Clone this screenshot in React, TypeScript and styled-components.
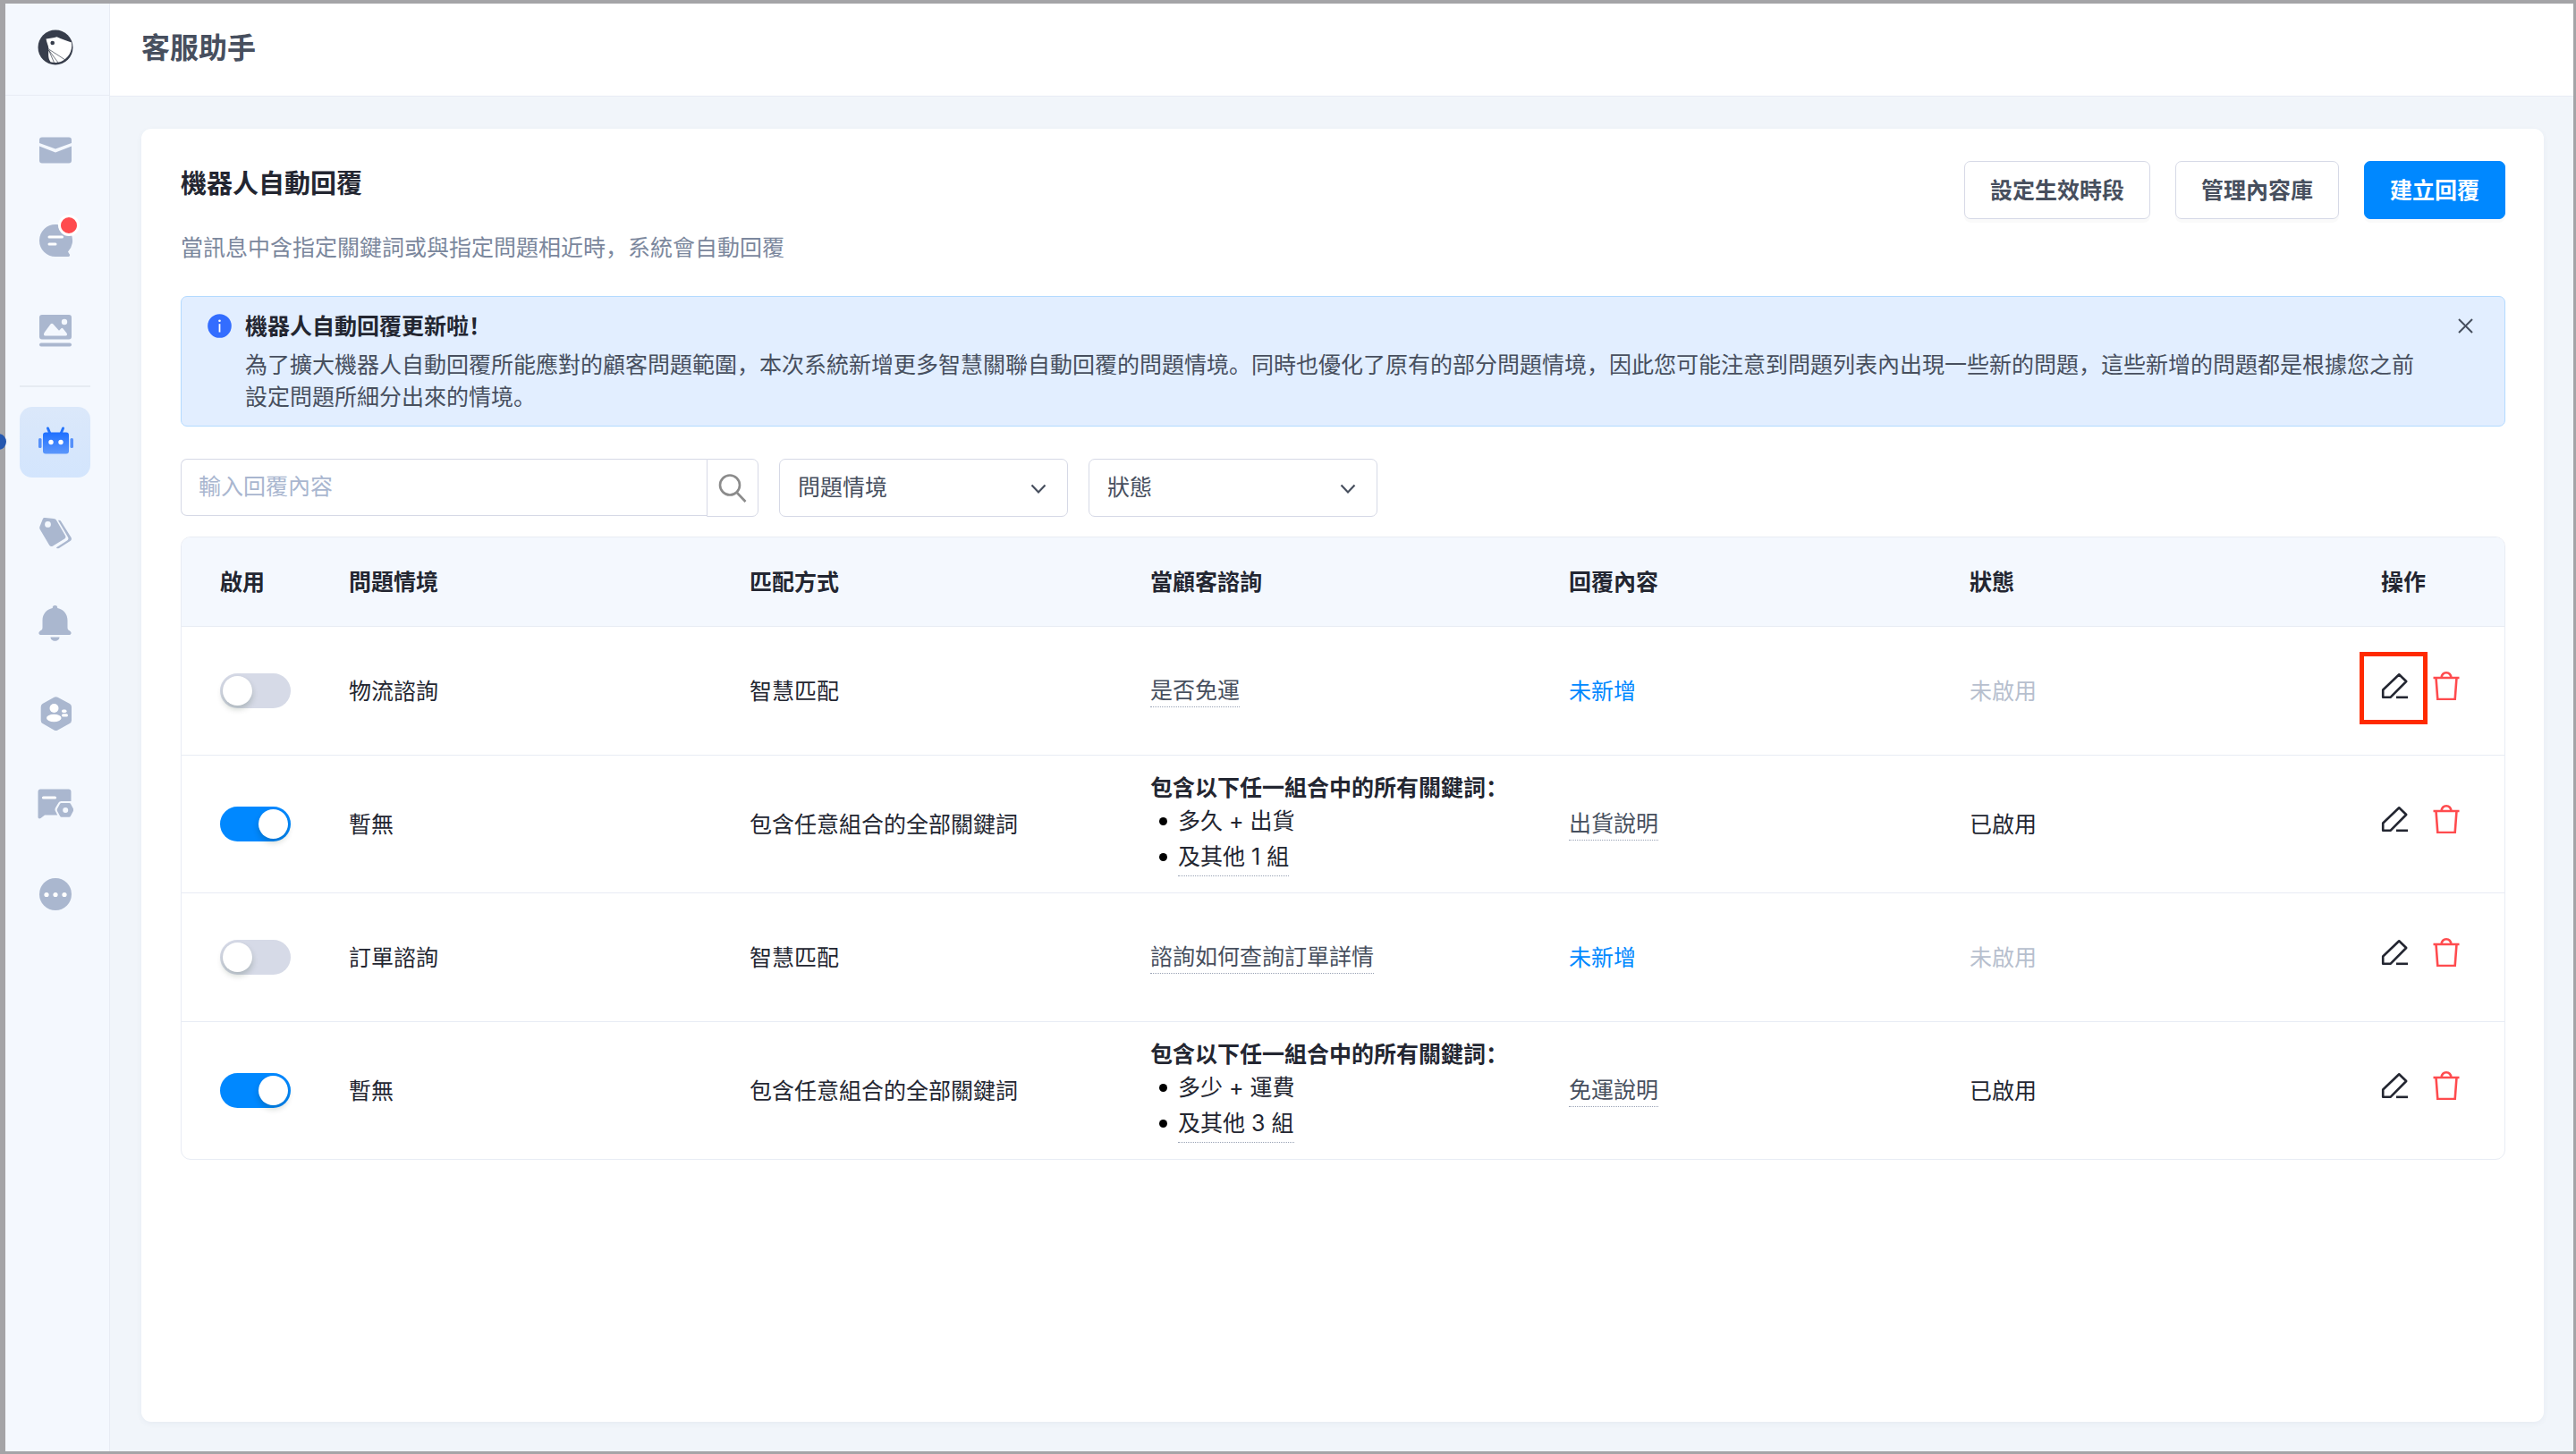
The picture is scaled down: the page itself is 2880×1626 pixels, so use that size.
import React, { useId, useState } from "react";
import styled, { createGlobalStyle, css } from "styled-components";

const color = {
  frame: "#a4a4a7",
  ink: "#232631",
  body: "#474f5e",
  muted: "#7b879d",
  placeholder: "#a9b6cf",
  disabled: "#b7bfce",
  primary: "#0088ff",
  danger: "#ff4b4e",
  line: "#e8ecf4",
  control: "#d6d9e6",
  rail: "#f4f8fe",
  canvas: "#f1f5fa",
  icon: "#aab7cf",
};

const GlobalStyle = createGlobalStyle`
  *, *::before, *::after { box-sizing: border-box; }
  body { margin: 0; }
  body, button, input, select {
    font-family: Inter, "Noto Sans CJK SC", "Noto Sans CJK TC", sans-serif;
    font-size: 25px;
    line-height: 36px;
    color: ${color.ink};
  }
  button { padding: 0; border: 0; background: none; cursor: pointer; }
  ul { margin: 0; padding: 0; list-style: none; }
  h1, h2, h3, p { margin: 0; font-weight: 700; }
`;

const Shell = styled.div`
  display: flex;
  min-height: 100vh;
  border: solid ${color.frame};
  border-width: 4px 3px 3px 6px;
  background: ${color.canvas};
`;

const Rail = styled.aside`
  flex: none;
  width: 117px;
  padding-right: 5px;
  background: ${color.rail};
  border-right: 1px solid ${color.line};
`;

const LogoLink = styled.a`
  display: flex;
  align-items: center;
  justify-content: center;
  height: 103px;
  margin-right: -5px;
  padding: 0 5px 4px 0;
  border-bottom: 1px solid ${color.line};
`;

const NavList = styled.ul`
  display: flex;
  flex-direction: column;
  align-items: center;
  gap: 22px;
  padding-top: 21px;
`;

const NavDivider = styled.li`
  width: 79px;
  height: 2px;
  background: #e6ebf2;
`;

const NavItem = styled.li`
  position: relative;
`;

const NavButton = styled.button<{ $active?: boolean }>`
  display: flex;
  align-items: center;
  justify-content: center;
  width: 79px;
  height: 79px;
  border-radius: 14px;
  ${(p) => p.$active && css`background: linear-gradient(#dbe8fa, #d3e5fd);`}
`;

const Badge = styled.span`
  position: absolute;
  top: 11px;
  left: 43px;
  width: 24px;
  height: 24px;
  border: 3px solid #fff;
  border-radius: 50%;
  background: ${color.danger};
`;

const ActiveDot = styled.span`
  position: absolute;
  top: 30px;
  left: -32px;
  width: 17px;
  height: 18px;
  border-radius: 50%;
  background: #2558b0;
`;

const Page = styled.div`
  flex: 1;
  min-width: 0;
  display: flex;
  flex-direction: column;
`;

const TopBar = styled.header`
  display: flex;
  align-items: center;
  height: 104px;
  padding: 0 35px 4px;
  background: #fff;
  border-bottom: 1px solid ${color.line};
`;

const PageTitle = styled.h1`
  font-size: 32px;
  color: ${color.body};
`;

const Card = styled.main`
  flex: 1;
  margin: 36px 33px 33px 35px;
  padding: 36px 43px 44px 44px;
  border-radius: 11px;
  background: #fff;
  box-shadow: 0 2px 6px rgba(60, 80, 120, 0.06);
`;

const CardHead = styled.div`
  display: flex;
  justify-content: space-between;
  align-items: flex-start;
`;

const Heading = styled.div`
  display: flex;
  flex-direction: column;
  gap: 35px;
  padding-top: 8px;
`;

const SectionTitle = styled.h2`
  font-size: 29px;
`;

const SectionNote = styled.p`
  color: ${color.muted};
  font-weight: 400;
`;

const Actions = styled.div`
  display: flex;
  gap: 28px;
`;

const Button = styled.button<{ $primary?: boolean }>`
  height: 65px;
  padding: 0 28px;
  border: 1px solid ${(p) => (p.$primary ? color.primary : color.control)};
  border-radius: 7px;
  background: ${(p) => (p.$primary ? color.primary : "#fff")};
  color: ${(p) => (p.$primary ? "#fff" : color.body)};
  font-weight: 700;
  box-shadow: 0 4px 0 rgba(0, 0, 0, 0.02);
`;

const Notice = styled.section`
  display: flex;
  align-items: flex-start;
  margin-top: 36px;
  padding: 15px 35px 14px 29px;
  border: 1px solid #b3daff;
  border-radius: 7px;
  background: #e2eeff;
`;

const NoticeIcon = styled.svg`
  flex: none;
  margin: 4px 15px 0 0;
`;

const NoticeText = styled.div`
  flex: 1;
  padding-right: 32px;
  color: ${color.body};
`;

const NoticeTitle = styled.h3`
  margin-bottom: 7px;
  font-size: 25px;
  color: ${color.ink};
`;

const NoticeBody = styled.p`
  font-weight: 400;
`;

const CloseButton = styled.button`
  display: flex;
  margin-top: 9px;
`;

const Filters = styled.form`
  display: flex;
  gap: 23px;
  margin-top: 36px;
`;

const SearchGroup = styled.div`
  display: flex;
  width: 646px;
`;

const SearchInput = styled.input`
  flex: 1;
  min-width: 0;
  height: 64px;
  padding: 0 19px 2px;
  border: 1px solid ${color.control};
  border-right: 0;
  border-radius: 7px 0 0 7px;
  &::placeholder { color: ${color.placeholder}; opacity: 1; }
`;

const SearchButton = styled.button`
  display: flex;
  align-items: center;
  justify-content: center;
  width: 58px;
  height: 65px;
  border: 1px solid ${color.control};
  border-radius: 0 7px 7px 0;
`;

const SelectBox = styled.div`
  position: relative;
  width: 323px;
`;

const Select = styled.select`
  appearance: none;
  width: 100%;
  height: 65px;
  padding: 0 60px 2px 20px;
  border: 1px solid ${color.control};
  border-radius: 7px;
  background: #fff;
  color: ${color.body};
`;

const SelectArrow = styled.svg`
  position: absolute;
  right: 24px;
  top: 28px;
  pointer-events: none;
`;

const TableFrame = styled.div`
  margin-top: 22px;
  border: 1px solid ${color.line};
  border-radius: 11px;
  overflow: hidden;
`;

const Table = styled.table`
  width: 100%;
  table-layout: fixed;
  border-spacing: 0;
  text-align: left;
`;

const Column = styled.col<{ $width: number }>`
  width: ${(p) => p.$width}px;
`;

const HeadCell = styled.th`
  height: 100px;
  padding: 0;
  border-bottom: 1px solid ${color.line};
  background: ${color.rail};
  font-weight: 700;
  &:first-child { padding-left: 43px; }
`;

const Row = styled.tr`
  height: 144px;
  &:not(:last-child) > td { border-bottom: 1px solid ${color.line}; }
`;

const Cell = styled.td`
  padding: 18px 0;
  &:first-child { padding-left: 43px; }
`;

const Toggle = styled.input`
  appearance: none;
  display: block;
  position: relative;
  width: 79px;
  height: 39px;
  margin: 0;
  border-radius: 20px;
  background: #d6dae7;
  cursor: pointer;
  &::before {
    content: "";
    position: absolute;
    top: 3px;
    left: 3px;
    width: 33px;
    height: 33px;
    border-radius: 50%;
    background: #fff;
    box-shadow: 0 4px 7px rgba(0, 35, 11, 0.2);
  }
  &:checked { background: ${color.primary}; }
  &:checked::before { left: 43px; }
`;

const Hint = styled.span`
  display: inline-block;
  border-bottom: 1px dotted #9aa3b5;
  color: ${color.body};
`;

const AddLink = styled.a`
  color: ${color.primary};
  text-decoration: none;
`;

const Status = styled.span<{ $on: boolean }>`
  color: ${(p) => (p.$on ? color.ink : color.disabled)};
`;

const RuleTitle = styled.p`
  font-weight: 700;
`;

const Rule = styled.li`
  display: flex;
  align-items: center;
  gap: 12px;
  padding-left: 10px;
  line-height: 38px;
  &::before {
    content: "";
    width: 9px;
    height: 9px;
    border-radius: 50%;
    background: #000;
  }
`;

const MoreRules = styled.span`
  border-bottom: 1px dotted #9aa3b5;
  line-height: 42px;
`;

const RowActions = styled.div`
  display: flex;
  gap: 25px;
  padding-bottom: 12px;
`;

const IconButton = styled.button`
  position: relative;
  display: flex;
  width: 32px;
  height: 32px;
`;

const Highlight = styled.span`
  position: absolute;
  inset: -22px -20px -27px -24px;
  border: 5px solid #ff2a00;
  pointer-events: none;
`;

const icon = { width: 40, height: 40, viewBox: "0 0 40 40", "aria-hidden": true } as const;

const Logo = () => (
  <svg {...icon}>
    <circle cx="20" cy="20" r="19.5" fill="#373d4b" />
    <path d="M9.5 10.5C14 10 18 9.5 21.5 8.3 27 10.5 32 12.600 38 14.500c1.500 10-4 18-12 21.500-4 1.200-8 1.200-11.500.2C11.500 32 12 27 12.500 22 12 17.500 10 14 9.500 10.500Z" fill="#fff" />
    <circle cx="16.700" cy="15" r="2.300" fill="#373d4b" />
    <path d="M12.500 22 31 34M12.500 23 23 37M12.500 23l6 14" stroke="#373d4b" strokeWidth=".7" fill="none" />
  </svg>
);

const MailIcon = () => (
  <svg {...icon} fill={color.icon}>
    <path d="M5 5.500h30a3 3 0 0 1 3 3v3.500L20 18.500 2 12V8.500a3 3 0 0 1 3-3Z" />
    <path d="M2 15.500 20 22.500 38 15.500V31.500a3 3 0 0 1-3 3H5a3 3 0 0 1-3-3Z" />
  </svg>
);

const ChatIcon = () => (
  <svg {...icon}>
    <path d="M20 2a18 18 0 0 0 0 36h14.500c1.500 0 2-2 1-3l-1.500-2.500A18 18 0 0 0 20 2Z" fill={color.icon} />
    <path d="M13 16h14.500M13 24h7" stroke="#fff" strokeWidth="3" strokeLinecap="round" />
  </svg>
);

const ImageIcon = () => (
  <svg {...icon} fill={color.icon}>
    <path fillRule="evenodd" d="M5 2h30a3 3 0 0 1 3 3v21.500a3 3 0 0 1-3 3H5a3 3 0 0 1-3-3V5a3 3 0 0 1 3-3Zm25 4.800a3.200 3.200 0 1 0 0 6.400 3.200 3.200 0 0 0 0-6.400ZM14.500 12.500 7.500 22c-1 2-.5 3.500 1 3.500h23c1.500 0 2-1.500 1-3l-4-5c-.8-1-1.500-1-2.300 0l-2.200 2.200-6.500-7.200c-1-1-2-1-3 0Z" />
    <rect x="2" y="33.500" width="36" height="4" rx="2" />
  </svg>
);

const RobotIcon = () => (
  <svg {...icon}>
    <defs>
      <linearGradient id="robot" x1="0" y1="0" x2="0" y2="1">
        <stop offset="0" stopColor="#1f70ff" />
        <stop offset="1" stopColor="#5c97fb" />
      </linearGradient>
    </defs>
    <path d="M11.500 4 14 10M28.500 4 26 10" stroke="#2473fb" strokeWidth="3" strokeLinecap="round" />
    <rect x="6" y="8.500" width="29" height="24" rx="3" fill="url(#robot)" />
    <rect x="1" y="15" width="3.500" height="11" rx="1.500" fill="#5590fa" />
    <rect x="36.500" y="15" width="3.500" height="11" rx="1.500" fill="#5590fa" />
    <circle cx="15" cy="19.500" r="2.700" fill="#fff" />
    <circle cx="26" cy="19.500" r="2.700" fill="#fff" />
  </svg>
);

const TagsIcon = () => (
  <svg {...icon} fill={color.icon}>
    <path fillRule="evenodd" d="M8.500 3 18 4c1.500.2 2.300.7 3 1.800L31 23c.8 1.500.5 2.500-.8 3.500l-13 8c-1.500 1-3 .7-4-.8L3 16.500c-.8-1.300-1-2-.6-3.500L5.800 4.500C6.300 3.300 7 2.900 8.500 3Zm3 4a3.400 3.400 0 1 0 0 6.800 3.400 3.400 0 0 0 0-6.800Z" />
    <path d="M23 6c1.500-.5 2.500 0 3.200 1L37.500 25c.9 1.500.5 3-1 4L24 37c-1.500.6-2.500.5-3-.8l12-7.700c1.600-1 1.800-2.300 1-3.800Z" />
  </svg>
);

const BellIcon = () => (
  <svg {...icon} fill={color.icon}>
    <path d="M19.500 0a2.800 2.800 0 0 1 2.700 3C29 4.500 33.500 9.500 33.500 17v8c0 2 1 2.500 2.500 3.500 2.800 1.800 1.500 4.500-.5 4.500h-32c-2 0-3.300-2.700-.5-4.500C4.500 27.500 5.500 27 5.500 25v-8C5.500 9.500 10 4.500 16.800 3A2.800 2.800 0 0 1 19.500 0Z" />
    <path d="M14.500 35.500h10c0 2.500-2.200 4.300-5 4.300s-5-1.800-5-4.300Z" />
  </svg>
);

const ContactIcon = () => (
  <svg {...icon}>
    <path d="M18.500 1.800q2-1.200 4 0L36 9q2 1.200 2 3.500v15q0 2.300-2 3.500L22.500 38.500q-2 1.200-4 0L5.500 31q-1.800-1.200-1.800-3.500v-15Q3.700 10.200 5.500 9Z" fill={color.icon} />
    <g fill="#fff">
      <circle cx="18.500" cy="14" r="5" />
      <ellipse cx="18.300" cy="25" rx="8.300" ry="4.200" />
      <rect x="27" y="15.500" width="5.500" height="3.400" rx="1.700" />
      <rect x="27" y="20.200" width="7" height="3.400" rx="1.700" />
    </g>
  </svg>
);

const NoteIcon = () => (
  <svg {...icon}>
    <path d="M3.500 3.500h31a3 3 0 0 1 3 3v10.500H26.500c-1.500 0-2.500.7-3.300 2l-3 5c-1 1.600-1 3 0 4.500l2 4H8L3.500 36c-1.500 1-3 .3-3-1.500V6.500a3 3 0 0 1 3-3Z" fill={color.icon} />
    <path d="M6.500 13h13" stroke="#fff" strokeWidth="3.200" strokeLinecap="round" />
    <path fillRule="evenodd" d="M26.500 19h9q1 0 1.500 1l3 5.500q.5 1.200 0 2.300L37 33.500q-.6 1.200-1.800 1.200h-8.500q-1 0-1.700-1.200l-3-5.500q-.5-1.200 0-2.400l3-5.500q.5-1.100 1.500-1.100Zm4.700 5a3 3 0 1 0 0 6 3 3 0 0 0 0-6Z" fill={color.icon} />
  </svg>
);

const MoreIcon = () => (
  <svg {...icon}>
    <circle cx="20" cy="20" r="18" fill={color.icon} />
    <g fill="#fff">
      <circle cx="10" cy="20.500" r="2.600" />
      <circle cx="20" cy="20.500" r="2.600" />
      <circle cx="30" cy="20.500" r="2.600" />
    </g>
  </svg>
);

const EditIcon = () => (
  <svg width="32" height="32" viewBox="0 0 32 32" fill="none" stroke={color.ink} strokeWidth="2.600" aria-hidden>
    <path d="M2.200 20.500 20.200 3.300 28.200 11 10.500 28.800H2.200Z" strokeLinejoin="round" />
    <path d="M17 28.800h13" />
  </svg>
);

const TrashIcon = () => (
  <svg width="32" height="32" viewBox="0 0 32 32" fill="none" stroke={color.danger} strokeWidth="2.600" aria-hidden>
    <path d="M1.500 7h29M4.500 7l1.800 24h19.400L27.500 7M10.500 7C11 3 13 1.300 16 1.300S21 3 21.500 7" />
  </svg>
);

const ChevronIcon = () => (
  <SelectArrow width="18" height="12" viewBox="0 0 18 12" fill="none" stroke={color.body} strokeWidth="2.200" aria-hidden>
    <path d="m1.500 1.500 7.500 8 7.500-8" />
  </SelectArrow>
);

const primaryNav = [
  { label: "訊息", Icon: MailIcon },
  { label: "對話", Icon: ChatIcon, badge: true },
  { label: "圖片", Icon: ImageIcon },
];

const secondaryNav = [
  { label: "客服助手", Icon: RobotIcon, active: true },
  { label: "標籤", Icon: TagsIcon },
  { label: "通知", Icon: BellIcon },
  { label: "成員", Icon: ContactIcon },
  { label: "設定", Icon: NoteIcon },
  { label: "更多", Icon: MoreIcon },
];

type Reply = {
  id: number;
  on: boolean;
  topic: string;
  match: string;
  question?: string;
  keywords?: string;
  others?: number;
  answer?: string;
  highlighted?: boolean;
};

const replies: Reply[] = [
  { id: 1, on: false, topic: "物流諮詢", match: "智慧匹配", question: "是否免運", highlighted: true },
  { id: 2, on: true, topic: "暫無", match: "包含任意組合的全部關鍵詞", keywords: "多久 + 出貨", others: 1, answer: "出貨說明" },
  { id: 3, on: false, topic: "訂單諮詢", match: "智慧匹配", question: "諮詢如何查詢訂單詳情" },
  { id: 4, on: true, topic: "暫無", match: "包含任意組合的全部關鍵詞", keywords: "多少 + 運費", others: 3, answer: "免運說明" },
];

const columns = [
  { title: "啟用", width: 187 },
  { title: "問題情境", width: 448 },
  { title: "匹配方式", width: 448 },
  { title: "當顧客諮詢", width: 468 },
  { title: "回覆內容", width: 448 },
  { title: "狀態", width: 460 },
  { title: "操作", width: 138 },
];

function FilterSelect({ label }: { label: string }) {
  const id = useId();
  return (
    <SelectBox>
      <Select id={id} aria-label={label} defaultValue="">
        <option value="">{label}</option>
      </Select>
      <ChevronIcon />
    </SelectBox>
  );
}

function ReplyRow({ reply }: { reply: Reply }) {
  const [on, setOn] = useState(reply.on);
  return (
    <Row>
      <Cell>
        <Toggle type="checkbox" role="switch" aria-label={`啟用 ${reply.topic}`} checked={on} onChange={() => setOn(!on)} />
      </Cell>
      <Cell>{reply.topic}</Cell>
      <Cell>{reply.match}</Cell>
      <Cell>
        {reply.question ? (
          <Hint>{reply.question}</Hint>
        ) : (
          <>
            <RuleTitle>包含以下任一組合中的所有關鍵詞：</RuleTitle>
            <ul>
              <Rule>{reply.keywords}</Rule>
              <Rule>
                <MoreRules>{`及其他 ${reply.others} 組`}</MoreRules>
              </Rule>
            </ul>
          </>
        )}
      </Cell>
      <Cell>{reply.answer ? <Hint>{reply.answer}</Hint> : <AddLink href="#add">未新增</AddLink>}</Cell>
      <Cell>
        <Status $on={on}>{on ? "已啟用" : "未啟用"}</Status>
      </Cell>
      <Cell>
        <RowActions>
          <IconButton type="button" aria-label="編輯">
            <EditIcon />
            {reply.highlighted && <Highlight />}
          </IconButton>
          <IconButton type="button" aria-label="刪除">
            <TrashIcon />
          </IconButton>
        </RowActions>
      </Cell>
    </Row>
  );
}

export default function App() {
  return (
    <>
      <GlobalStyle />
      <Shell lang="zh-Hans">
        <Rail>
          <LogoLink href="#home" aria-label="首頁">
            <Logo />
          </LogoLink>
          <nav>
            <NavList>
              {primaryNav.map(({ label, Icon, badge }) => (
                <NavItem key={label}>
                  <NavButton type="button" aria-label={label}>
                    <Icon />
                  </NavButton>
                  {badge && <Badge />}
                </NavItem>
              ))}
              <NavDivider role="separator" />
              {secondaryNav.map(({ label, Icon, active }) => (
                <NavItem key={label}>
                  {active && <ActiveDot />}
                  <NavButton type="button" aria-label={label} $active={active}>
                    <Icon />
                  </NavButton>
                </NavItem>
              ))}
            </NavList>
          </nav>
        </Rail>
        <Page>
          <TopBar>
            <PageTitle>客服助手</PageTitle>
          </TopBar>
          <Card>
            <CardHead>
              <Heading>
                <SectionTitle>機器人自動回覆</SectionTitle>
                <SectionNote>當訊息中含指定關鍵詞或與指定問題相近時，系統會自動回覆</SectionNote>
              </Heading>
              <Actions>
                <Button type="button">設定生效時段</Button>
                <Button type="button">管理內容庫</Button>
                <Button type="button" $primary>建立回覆</Button>
              </Actions>
            </CardHead>
            <Notice>
              <NoticeIcon width="27" height="27" viewBox="0 0 27 27" aria-hidden>
                <circle cx="13.500" cy="13.500" r="13.300" fill="#336dff" />
                <path d="M13.500 11.200v9.300" stroke="#fff" strokeWidth="1.800" />
                <circle cx="13.500" cy="7.800" r="1.300" fill="#fff" />
              </NoticeIcon>
              <NoticeText>
                <NoticeTitle>機器人自動回覆更新啦！</NoticeTitle>
                <NoticeBody>
                  為了擴大機器人自動回覆所能應對的顧客問題範圍，本次系統新增更多智慧關聯自動回覆的問題情境。同時也優化了原有的部分問題情境，因此您可能注意到問題列表內出現一些新的問題，這些新增的問題都是根據您之前設定問題所細分出來的情境。
                </NoticeBody>
              </NoticeText>
              <CloseButton type="button" aria-label="關閉">
                <svg width="17" height="17" viewBox="0 0 17 17" stroke={color.body} strokeWidth="2" aria-hidden>
                  <path d="m1 1 15 15M16 1 1 16" />
                </svg>
              </CloseButton>
            </Notice>
            <Filters onSubmit={(e) => e.preventDefault()}>
              <SearchGroup>
                <SearchInput type="text" aria-label="輸入回覆內容" placeholder="輸入回覆內容" />
                <SearchButton type="submit" aria-label="搜尋">
                  <svg width="34" height="34" viewBox="0 0 34 34" fill="none" stroke="#8b8b8b" strokeWidth="2.600" aria-hidden>
                    <circle cx="14" cy="13.500" r="11" />
                    <path d="m21.500 21.500 10 10.500" />
                  </svg>
                </SearchButton>
              </SearchGroup>
              <FilterSelect label="問題情境" />
              <FilterSelect label="狀態" />
            </Filters>
            <TableFrame>
              <Table>
                <colgroup>
                  {columns.map((c) => (
                    <Column key={c.title} $width={c.width} />
                  ))}
                </colgroup>
                <thead>
                  <tr>
                    {columns.map((c) => (
                      <HeadCell key={c.title} scope="col">{c.title}</HeadCell>
                    ))}
                  </tr>
                </thead>
                <tbody>
                  {replies.map((r) => (
                    <ReplyRow key={r.id} reply={r} />
                  ))}
                </tbody>
              </Table>
            </TableFrame>
          </Card>
        </Page>
      </Shell>
    </>
  );
}
